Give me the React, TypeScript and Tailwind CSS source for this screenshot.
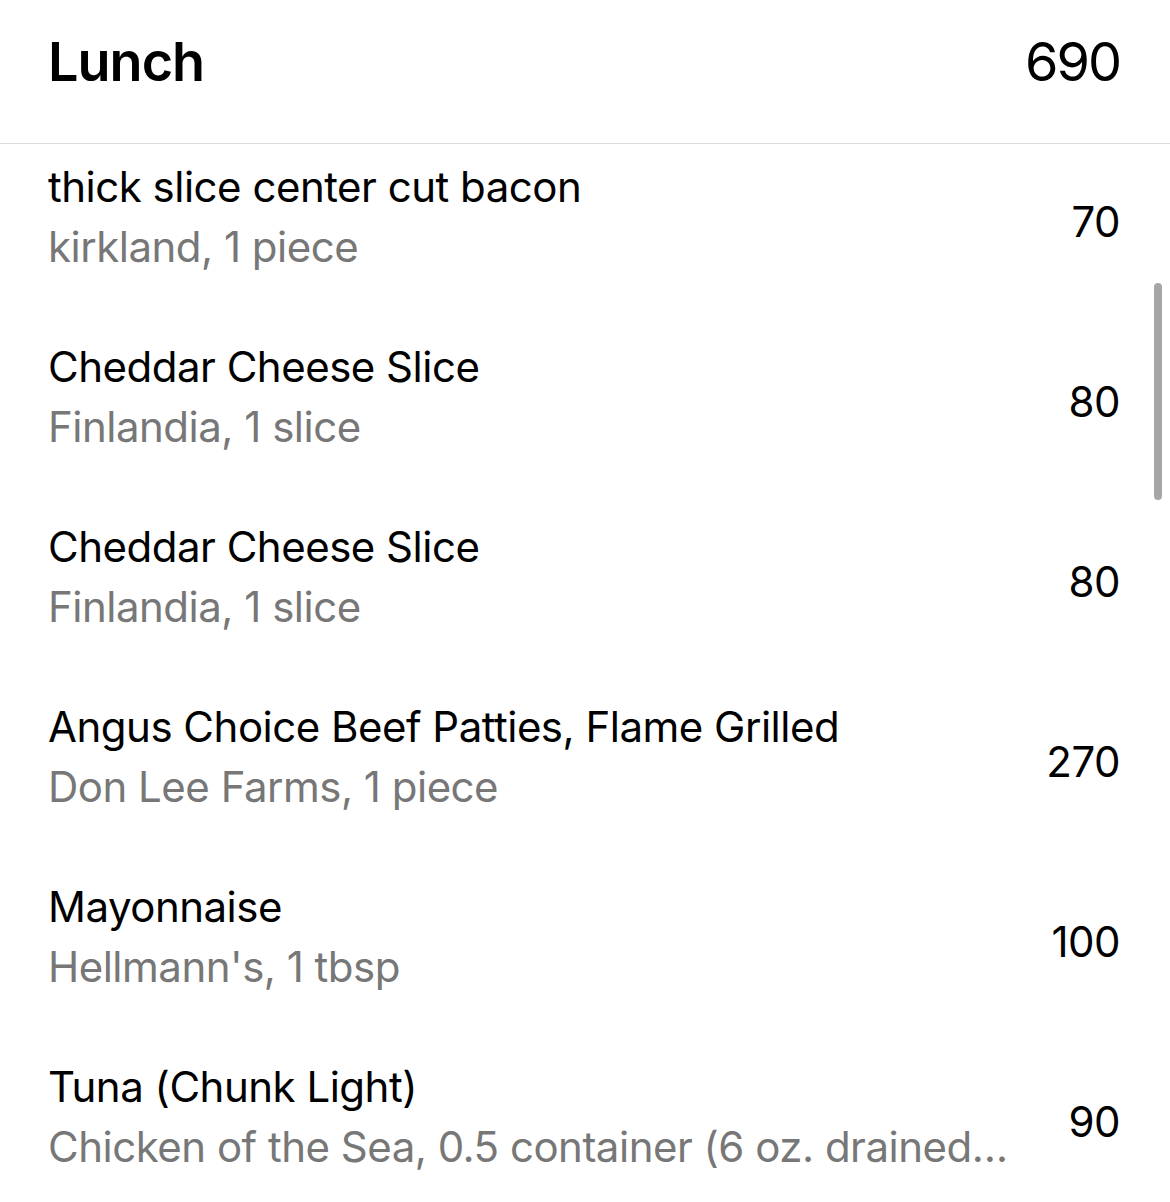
import React from 'react';

interface FoodEntry {
  name: string;
  detail: string;
  calories: number;
}

const entries: FoodEntry[] = [
  { name: 'thick slice center cut bacon', detail: 'kirkland, 1 piece', calories: 70 },
  { name: 'Cheddar Cheese Slice', detail: 'Finlandia, 1 slice', calories: 80 },
  { name: 'Cheddar Cheese Slice', detail: 'Finlandia, 1 slice', calories: 80 },
  { name: 'Angus Choice Beef Patties, Flame Grilled', detail: 'Don Lee Farms, 1 piece', calories: 270 },
  { name: 'Mayonnaise', detail: "Hellmann's, 1 tbsp", calories: 100 },
  {
    name: 'Tuna (Chunk Light)',
    detail: 'Chicken of the Sea, 0.5 container (6 oz. drained weight)',
    calories: 90,
  },
];

const EntryRow: React.FC<{ entry: FoodEntry }> = ({ entry }) => (
  <div className="flex h-[180px] items-center justify-between gap-4 pl-[48px] pr-[50px]">
    <div className="flex min-w-0 max-w-[968px] flex-col pb-[11px] text-[42px] leading-[60px] tracking-[-0.5px]">
      <p className="truncate text-black">{entry.name}</p>
      <p className="truncate text-[#777777]">{entry.detail}</p>
    </div>
    <p className="shrink-0 text-[42px] leading-[60px] tracking-[-0.5px] text-black">{entry.calories}</p>
  </div>
);

const App: React.FC = () => {
  const total = entries.reduce((sum, e) => sum + e.calories, 0);

  return (
    <div className="relative h-[1202px] w-[1170px] overflow-hidden bg-white font-['Inter',_'Liberation_Sans',_sans-serif]">
      <div className="flex h-[144px] items-start justify-between border-b border-[#dcdcdc] pl-[48px] pr-[50px] pt-[29px]">
        <h2 className="text-[54px] font-semibold leading-[66px] tracking-[-1px] text-black">Lunch</h2>
        <span className="text-[54px] font-normal leading-[66px] tracking-[-2px] text-black">{total}</span>
      </div>
      <div className="h-[1058px] overflow-hidden">
        <div className="-mt-[12px]">
          {entries.map((entry, i) => (
            <EntryRow key={i} entry={entry} />
          ))}
        </div>
      </div>
      <div className="absolute right-[8px] top-[283px] h-[217px] w-[8px] rounded-full bg-[#a6a6a6]" />
    </div>
  );
};

export default App;
